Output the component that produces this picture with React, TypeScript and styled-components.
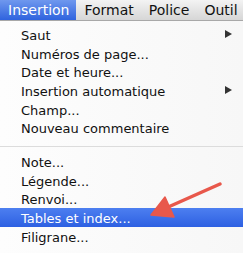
import styled, { createGlobalStyle, css } from "styled-components";

const GlobalStyle = createGlobalStyle`
  html, body {
    margin: 0;
    padding: 0;
    background: #fafafa;
  }
  body {
    font-family: "DejaVu Sans", "Liberation Sans", sans-serif;
    -webkit-font-smoothing: antialiased;
  }
`;

type Entry = { label: string; submenu?: boolean; active?: boolean } | "sep";

const entries: Entry[] = [
  { label: "Saut", submenu: true },
  { label: "Numéros de page..." },
  { label: "Date et heure..." },
  { label: "Insertion automatique", submenu: true },
  { label: "Champ..." },
  { label: "Nouveau commentaire" },
  "sep",
  { label: "Note..." },
  { label: "Légende..." },
  { label: "Renvoi..." },
  { label: "Tables et index...", active: true },
  { label: "Filigrane..." },
];

const titles = ["Insertion", "Format", "Police", "Outil"];

const App = () => {
  return (
    <>
      <GlobalStyle />
      <Screen>
        <MenuBar>
          {titles.map((t, i) => (
            <BarTitle key={t} active={i === 0}>{t}</BarTitle>
          ))}
        </MenuBar>
        <Menu>
          {entries.map((e, i) =>
            e === "sep" ? (
              <Separator key={i} />
            ) : (
              <Item key={i} active={e.active}>
                <span>{e.label}</span>
                {e.submenu && <Chevron />}
              </Item>
            )
          )}
          {/* red annotation arrow drawn over the menu */}
          <Pointer viewBox="0 0 243 253" width="243" height="253">
            <line x1="220" y1="184" x2="166" y2="208" stroke="#e8584b" strokeWidth="3.5" strokeLinecap="round" />
            <polygon points="151,215 165,197 174,217" fill="#e8584b" stroke="#e8584b" strokeWidth="1.5" strokeLinejoin="round" />
          </Pointer>
        </Menu>
      </Screen>
    </>
  );
};

export default App;

const Screen = styled.div`
  width: 243px;
  height: 253px;
  overflow: hidden;
  position: relative;
  background: #fbfbfb;
`;

const MenuBar = styled.div`
  display: flex;
  height: 21px;
  align-items: stretch;
  background: linear-gradient(#f3f3f3, #d6d6d6);
  border-bottom: 1px solid #a8a8a8;
  box-sizing: border-box;
  white-space: nowrap;
`;

const BarTitle = styled.div<{ active?: boolean }>`
  display: flex;
  align-items: center;
  padding: 0 7px 1px 8px;
  font-size: 14px;
  color: #111;
  ${({ active }) => active && css`
    background: linear-gradient(#6f98ee, #2f63de);
    color: #fff;
  `}
`;

const Menu = styled.div`
  display: flex;
  flex-direction: column;
  padding-top: 4px;
  background: linear-gradient(90deg, #fdfdfd, #f7f7f7);
  height: 232px;
`;

const Item = styled.div<{ active?: boolean }>`
  display: flex;
  align-items: center;
  justify-content: space-between;
  box-sizing: border-box;
  height: 18.7px;
  padding: 2px 11px 0 21px;
  font-size: 13px;
  color: #111;
  ${({ active }) => active && css`
    background: linear-gradient(#4d7ff0, #2d60e2);
    color: #fff;
  `}
`;

const Chevron = styled.span`
  width: 0;
  height: 0;
  margin-top: -2px;
  border-top: 4px solid transparent;
  border-bottom: 4px solid transparent;
  border-left: 7px solid #333;
`;

const Separator = styled.div`
  height: 1px;
  margin: 9px 0 5px;
  background: #dcdcdc;
`;

const Pointer = styled.svg`
  position: absolute;
  left: 0;
  top: 0;
  pointer-events: none;
`;
